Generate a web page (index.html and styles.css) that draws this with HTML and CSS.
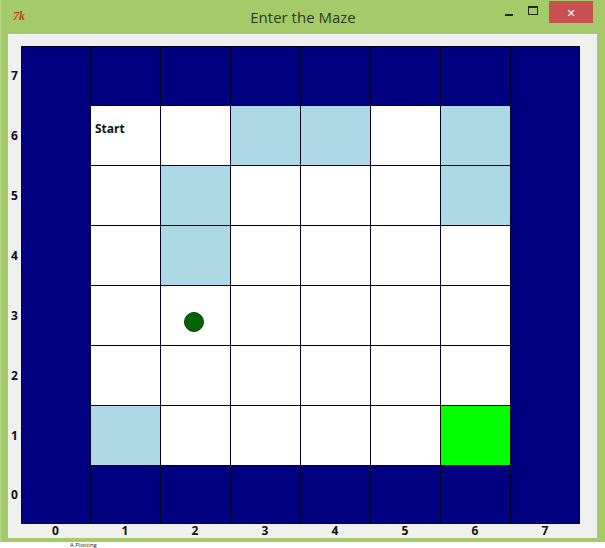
FILE: index.html
```html
<!DOCTYPE html>
<html>
<head>
<meta charset="utf-8">
<link rel="stylesheet" href="styles.css">
</head>
<body>
<div class="window">
  <div class="titlebar">
    <span class="tk-icon">7k</span>
    <span class="title">Enter the Maze</span>
    <div class="controls">
      <span class="ctl min"><span class="min-bar"></span></span>
      <span class="ctl max"><span class="max-box"></span></span>
      <span class="ctl close">&#x2715;</span>
    </div>
  </div>
  <div class="client">
    <div class="board">
      <div class="ylabels">
        <span>7</span><span>6</span><span>5</span><span>4</span><span>3</span><span>2</span><span>1</span><span>0</span>
      </div>
      <div class="maze">
        <!-- row 7 -->
        <div class="c wall"></div><div class="c wall"></div><div class="c wall"></div><div class="c wall"></div><div class="c wall"></div><div class="c wall"></div><div class="c wall"></div><div class="c wall"></div>
        <!-- row 6 -->
        <div class="c wall"></div><div class="c open start">Start</div><div class="c open"></div><div class="c visited"></div><div class="c visited"></div><div class="c open"></div><div class="c visited"></div><div class="c wall"></div>
        <!-- row 5 -->
        <div class="c wall"></div><div class="c open"></div><div class="c visited"></div><div class="c open"></div><div class="c open"></div><div class="c open"></div><div class="c visited"></div><div class="c wall"></div>
        <!-- row 4 -->
        <div class="c wall"></div><div class="c open"></div><div class="c visited"></div><div class="c open"></div><div class="c open"></div><div class="c open"></div><div class="c open"></div><div class="c wall"></div>
        <!-- row 3 -->
        <div class="c wall"></div><div class="c open"></div><div class="c open"><span class="token"></span></div><div class="c open"></div><div class="c open"></div><div class="c open"></div><div class="c open"></div><div class="c wall"></div>
        <!-- row 2 -->
        <div class="c wall"></div><div class="c open"></div><div class="c open"></div><div class="c open"></div><div class="c open"></div><div class="c open"></div><div class="c open"></div><div class="c wall"></div>
        <!-- row 1 -->
        <div class="c wall"></div><div class="c visited"></div><div class="c open"></div><div class="c open"></div><div class="c open"></div><div class="c open"></div><div class="c goal"></div><div class="c wall"></div>
        <!-- row 0 -->
        <div class="c wall"></div><div class="c wall"></div><div class="c wall"></div><div class="c wall"></div><div class="c wall"></div><div class="c wall"></div><div class="c wall"></div><div class="c wall"></div>
      </div>
      <div class="corner"></div>
      <div class="xlabels">
        <span>0</span><span>1</span><span>2</span><span>3</span><span>4</span><span>5</span><span>6</span><span>7</span>
      </div>
    </div>
  </div>
  <div class="bottom-border"></div>
</div>
<div class="below">A Plotting</div>
</body>
</html>
```

FILE: styles.css
```css
html, body {
  margin: 0;
  padding: 0;
}
body {
  width: 605px;
  height: 548px;
  overflow: hidden;
  background: #ffffff;
  font-family: "Open Sans", "DejaVu Sans", sans-serif;
}
.window {
  width: 605px;
  height: 542px;
  background: #a5ca69;
  display: flex;
  flex-direction: column;
  box-sizing: border-box;
  border-left: 1px solid #b9d88a;
}
.titlebar {
  height: 34px;
  display: flex;
  align-items: center;
  position: relative;
}
.tk-icon {
  position: absolute;
  left: 12px;
  top: 9px;
  font-family: "Liberation Serif", serif;
  font-style: italic;
  font-weight: bold;
  font-size: 12px;
  color: #c8401a;
}
.title {
  flex: 1;
  text-align: center;
  font-size: 15px;
  color: #2e3a22;
  margin-top: -1px;
}
.controls {
  position: absolute;
  right: 12px;
  top: 1px;
  display: flex;
  align-items: flex-start;
}
.ctl {
  display: flex;
  align-items: center;
  justify-content: center;
  height: 22px;
}
.min {
  width: 26px;
}
.min-bar {
  width: 8px;
  height: 2px;
  background: #1f2a12;
  margin-top: 6px;
}
.max {
  width: 22px;
  margin-right: 5px;
}
.max-box {
  width: 8px;
  height: 6px;
  border: 1px solid #1f2a12;
  border-top-width: 2px;
  margin-top: -4px;
}
.close {
  width: 44px;
  background: #c85050;
  color: #ffffff;
  font-size: 11px;
  font-weight: bold;
}
.client {
  margin: 0 8px 0 7px;
  height: 504px;
  background: #f0f0f0;
  box-sizing: border-box;
  padding: 11px 0 0 13px;
  border-top: 1px solid #f7f7f7;
}
.board {
  display: grid;
  grid-template-columns: 0 559px;
  grid-template-rows: 478px 14px;
}
.ylabels {
  display: grid;
  grid-template-rows: 59px 60px 60px 60px 60px 60px 60px 59px;
  width: 13px;
  margin-left: -13px;
  font-size: 12px;
  font-weight: bold;
  color: #111;
}
.ylabels span {
  display: flex;
  align-items: center;
  justify-content: center;
}
.maze {
  display: grid;
  grid-template-columns: 68px repeat(6, 69px) 68px;
  grid-template-rows: 58px repeat(6, 59px) 57px;
  gap: 1px;
  padding: 1px;
  background: #000022;
}
.c {
  position: relative;
}
.wall {
  background: #000080;
}
.open {
  background: #ffffff;
}
.visited {
  background: #add8e6;
}
.goal {
  background: #00ff00;
}
.start {
  font-size: 12px;
  font-weight: bold;
  color: #111;
  padding: 14px 0 0 4px;
}
.token {
  position: absolute;
  left: 23px;
  top: 26px;
  width: 20px;
  height: 20px;
  border-radius: 50%;
  background: #006400;
  box-sizing: border-box;
  border: 1px solid #0d3d0d;
}
.xlabels {
  display: grid;
  grid-template-columns: 69px repeat(6, 70px) 70px;
  font-size: 12px;
  font-weight: bold;
  color: #111;
  line-height: 14px;
}
.xlabels span {
  text-align: center;
}
.bottom-border {
  height: 4px;
}
.below {
  padding-left: 70px;
  font-size: 6px;
  line-height: 6px;
  color: #222;
}
```
